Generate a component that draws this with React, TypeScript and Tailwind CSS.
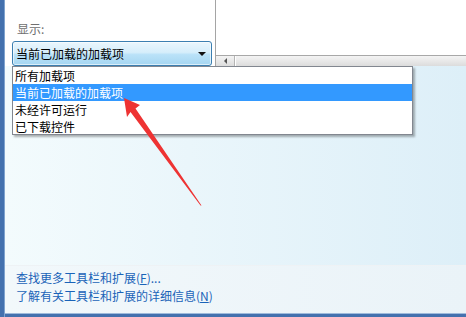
import React from "react";

const font = "font-['Noto_Sans_CJK_SC','Microsoft_YaHei',sans-serif]";

export default function App() {
  return (
    <div className={`relative w-[466px] h-[317px] overflow-hidden flex bg-white ${font} text-[12px] leading-[17px]`}>
      {/* left window frame */}
      <div className="w-[5px] h-full bg-[#4471ae] border-r border-[#7fa3cf]" />
      <div className="flex-1 flex flex-col">
        {/* top section */}
        <div className="h-[66px] flex">
          <div className="w-[211px] bg-white border-r border-[#a5a5a5] pl-[7px] pr-[4px] pt-[20px]">
            <div className="text-[#707070] pl-[5px] h-[21px]">显示:</div>
            <div className="h-[25px] w-[200px] rounded-[3px] border border-[#3c7fb1] bg-[linear-gradient(to_bottom,#eaf6fd_0%,#d6eefb_45%,#bae2f8_55%,#a5d6f2_100%)] flex items-center pl-[3px] pr-[5px] shadow-[inset_0_0_0_1px_rgba(255,255,255,0.6)]">
              <span className="flex-1 text-black">当前已加载的加载项</span>
              <span className="w-0 h-0 border-l-[4px] border-r-[4px] border-t-[4px] border-l-transparent border-r-transparent border-t-[#111]" />
            </div>
          </div>
          <div className="flex-1 flex flex-col bg-white">
            <div className="flex-1" />
            <div className="h-[11px] flex border-t border-[#a8a8a8] bg-[linear-gradient(to_bottom,#f4f4f4,#dcdcdc)]">
              <div className="w-[19px] border-r border-[#b5b5b5] flex items-center justify-center">
                <span className="w-0 h-0 border-t-[3px] border-b-[3px] border-r-[3px] border-t-transparent border-b-transparent border-r-[#555]" />
              </div>
              <div className="flex-1 border-l border-white" />
            </div>
          </div>
        </div>
        {/* details pane */}
        <div className="flex-1 bg-[linear-gradient(to_right,#f3fbfd_0%,#eaf6fb_40%,#ddeff8_100%)]" />
        {/* links */}
        <div className="h-[48px] bg-[linear-gradient(to_right,#f2f8fb,#eaf3f8)] border-t border-[#eef2f5] pl-[11px] pt-[3px] flex flex-col text-[#1a63b8] leading-[18px]">
          <span>
            查找更多工具栏和扩展(<span className="underline">F</span>)...
          </span>
          <span>
            了解有关工具栏和扩展的详细信息(<span className="underline">N</span>)
          </span>
        </div>
        <div className="h-[4px] bg-[#4471ae] border-t border-[#9fbadb]" />
      </div>

      {/* dropdown list overlay */}
      <div className="absolute left-[12px] top-[66px] w-[401px] h-[69px] bg-white border border-[#828790] shadow-[2px_2px_2px_rgba(0,0,0,0.3)] flex flex-col">
        <div className="h-[17px] pl-[2px] text-black">所有加载项</div>
        <div className="h-[17px] pl-[2px] bg-[#3399ff] text-white">当前已加载的加载项</div>
        <div className="h-[17px] pl-[2px] text-black">未经许可运行</div>
        <div className="h-[17px] pl-[2px] text-black">已下载控件</div>
      </div>

      {/* red arrow annotation */}
      <svg className="absolute left-0 top-0 pointer-events-none" width="466" height="317" viewBox="0 0 466 317">
        <polygon
          points="124,98 140,105 135.5,108.5 201.5,205.5 200.5,205.5 130.5,112 127,117"
          fill="#ee3333"
        />
      </svg>
    </div>
  );
}
